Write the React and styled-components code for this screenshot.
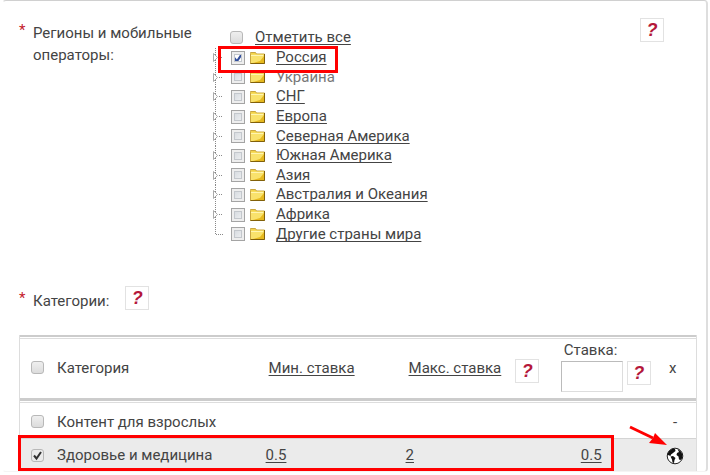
import React from "react";
import styled, { createGlobalStyle } from "styled-components";

const GlobalStyle = createGlobalStyle`
  * { box-sizing: border-box; }
  body {
    margin: 0;
    background: #fff;
    color: #444;
    font: 15px/22px Roboto, "Liberation Sans", sans-serif;
    overflow: hidden;
  }
`;

const Card = styled.main`
  margin: 0 2px 0 2px;
  padding: 17px 9px 0 16px;
  border: 1px solid #d0d0d0;
  border-left-color: #fff;
  border-right: 2px solid #dedede;
  border-bottom-color: #f4f4f4;
  border-radius: 4px;
`;

const Field = styled.section`
  display: grid;
  grid-template-columns: 14px 180px 1fr auto;
  align-items: start;
  padding-right: 33px;
`;

const Star = styled.span`
  color: #c4202c;
  line-height: 24px;
`;

const FieldLabel = styled.h2`
  margin: 4px 0 0;
  font-size: 15px;
  font-weight: 400;
  white-space: nowrap;
`;

const HelpButton = styled.button`
  flex: none;
  width: 24px;
  height: 24px;
  margin-top: ${(p) => p.$drop || 0}px;
  padding: 0;
  border: 1px solid #e2e2e2;
  background: #fff;
  color: #b4173a;
  font: italic 700 18px/20px "Liberation Sans", Arial, sans-serif;
`;

const Check = styled.input`
  appearance: none;
  flex: none;
  display: block;
  width: ${(p) => (p.$square ? 14 : 13)}px;
  height: ${(p) => (p.$square ? 14 : 13)}px;
  margin: 0;
  border: 1px solid ${(p) => (p.$square ? "#a4a4a4" : "#b8b8b8")};
  border-radius: ${(p) => (p.$square ? 0 : 3)}px;
  background: ${(p) =>
    p.$square
      ? "linear-gradient(135deg, #cfd4da, #f4f5f6)"
      : "linear-gradient(#efefef, #dcdcdc)"};
  box-shadow: ${(p) => (p.$square ? "inset 0 0 0 2px #eee, inset 0 0 0 3px #c3c7cc" : "none")};

  &:checked {
    background-image: url("data:image/svg+xml,%3Csvg xmlns='http://www.w3.org/2000/svg' viewBox='0 0 11 11'%3E%3Cpath d='M2 5.5L4.5 8.5L9 2' fill='none' stroke='${(p) =>
      p.$square ? "%23324f9c" : "%23333"}' stroke-width='2'/%3E%3C/svg%3E");
  }
`;

const Regions = styled.div`
  padding-top: 8px;
`;

const CheckAll = styled.div`
  display: flex;
  align-items: center;
  gap: 12px;
  height: 22px;
  padding-left: 17px;
`;

const Tree = styled.ul`
  display: grid;
  grid-auto-rows: 1fr;
  height: 196px;
  margin: 0;
  padding: 0;
  list-style: none;
  line-height: 19px;
`;

const TreeItem = styled.li`
  position: relative;
  display: flex;
  align-items: center;
`;

const Branch = styled.svg`
  flex: none;
  width: 18px;
  height: 19px;
`;

const Folder = styled.svg`
  flex: none;
  width: 16px;
  height: 14px;
  margin: 0 10px 0 5px;
`;

const TextLink = styled.a`
  color: ${(p) => (p.$muted ? "#777" : "#444")};
  text-decoration: ${(p) => (p.$muted ? "none" : "underline")};
  text-decoration-thickness: 1px;
  text-decoration-skip-ink: none;
  text-underline-offset: 2px;
  white-space: nowrap;
`;

const RegionMark = styled.span`
  position: absolute;
  top: -2px;
  left: 5px;
  width: 120px;
  height: 27px;
  border: 3px solid #f00;
  pointer-events: none;
  z-index: 1;
`;

const CategoryField = styled.section`
  display: grid;
  grid-template-columns: 14px auto auto;
  justify-content: start;
  align-items: start;
  margin-top: 42px;
`;

const CategoryHelp = styled.div`
  margin-left: 16px;
`;

const Table = styled.table`
  width: 100%;
  margin-top: 23px;
  border-collapse: separate;
  border-spacing: 0;
  table-layout: fixed;
  border-left: 1px solid #ddd;
  border-right: 1px solid #ddd;
`;

const Col = styled.col`
  width: ${(p) => p.$w};
`;

const HeadCell = styled.th`
  height: 66px;
  padding: ${(p) => p.$pad || "0"};
  border-top: 2px solid #ccc;
  border-bottom: 3px solid #ccc;
  box-shadow: inset 0 1px #fff, inset 0 2px #ddd;
  font-weight: 400;
  text-align: left;
`;

const Row = styled.tr`
  position: relative;
  background: ${(p) => (p.$active ? "#ebebeb" : "#fff")};
`;

const Cell = styled.td`
  height: ${(p) => (p.$first ? 38 : 32)}px;
  padding: ${(p) => p.$pad || (p.$first ? "4px 0 0" : "0")};
  border-bottom: ${(p) => (p.$first ? "1px solid #d4d4d4" : "0")};
  box-shadow: ${(p) => (p.$first ? "inset 0 1px #fff, inset 0 2px #ddd" : "none")};
  text-align: ${(p) => p.$align || "left"};
`;

const CheckLabel = styled.label`
  display: flex;
  align-items: center;
  gap: 13px;
  padding-left: 11px;
  white-space: nowrap;
`;

const Inline = styled.div`
  display: flex;
  align-items: ${(p) => p.$align || "center"};
  gap: ${(p) => p.$gap}px;
`;

const RateLabel = styled.label`
  display: block;
  padding-left: 3px;
  line-height: 22px;
`;

const RateInput = styled.input`
  width: 62px;
  height: 31px;
  padding: 0 4px;
  border: 1px solid #ddd;
  border-top-color: #bbb;
  border-left-color: #bbb;
  background: #fff;
  font: inherit;
`;

const RowMark = styled.span`
  position: absolute;
  top: -4px;
  bottom: 0;
  left: -2px;
  right: 82px;
  border: 3px solid #f00;
  pointer-events: none;
`;

const Globe = styled.svg`
  display: inline-block;
  width: 18px;
  height: 18px;
  vertical-align: middle;
`;

const Arrow = styled.svg`
  position: absolute;
  top: -14px;
  right: 27px;
  width: 40px;
  height: 22px;
  pointer-events: none;
`;

const regions = [
  { name: "Россия", checked: true },
  { name: "Украина", muted: true },
  { name: "СНГ" },
  { name: "Европа" },
  { name: "Северная Америка" },
  { name: "Южная Америка" },
  { name: "Азия" },
  { name: "Австралия и Океания" },
  { name: "Африка" },
  { name: "Другие страны мира" },
];

function Help({ drop }) {
  return <HelpButton type="button" aria-label="Справка" $drop={drop}>?</HelpButton>;
}

function BranchLines({ last }) {
  return (
    <Branch viewBox="0 0 18 19" fill="none" aria-hidden="true">
      <path d={last ? "M2.5 0V10" : "M2.5 0V19"} stroke="#888" strokeDasharray="1 1" />
      <path d={last ? "M3 9.500H10" : "M6 9.500H10"} stroke="#888" strokeDasharray="1 1" />
      {!last && <path d="M.5 5.500V13.500L4.500 9.500Z" fill="#fff" stroke="#aaa" />}
    </Branch>
  );
}

function FolderIcon() {
  return (
    <Folder viewBox="0 0 16 14" aria-hidden="true">
      <path d="M.5 2.500V1.500H5.500L6.500 3H14.500V12.500H.5Z" fill="#f3d34a" stroke="#c9a640" />
      <path d="M1 3.500H14V12H1Z" fill="#f9e26c" />
      <path d="M1 4.500H13" stroke="#fff5b0" />
      <path d="M14 5V12H3L10 10Z" fill="#e6b91f" />
      <path d="M.5 12.500H14.500V3" fill="none" stroke="#81600b" />
    </Folder>
  );
}

export default function App() {
  return (
    <>
      <GlobalStyle />
      <Card>
        <Field>
          <Star>*</Star>
          <FieldLabel>Регионы и мобильные<br />операторы:</FieldLabel>
          <Regions>
            <CheckAll>
              <Check type="checkbox" id="all-regions" aria-label="Отметить все" />
              <TextLink href="#all">Отметить все</TextLink>
            </CheckAll>
            <Tree>
              {regions.map((r, i) => (
                <TreeItem key={r.name}>
                  <BranchLines last={i === regions.length - 1} />
                  <Check type="checkbox" $square defaultChecked={r.checked} aria-label={r.name} />
                  <FolderIcon />
                  <TextLink href="#region" $muted={r.muted}>{r.name}</TextLink>
                  {r.checked && <RegionMark />}
                </TreeItem>
              ))}
            </Tree>
          </Regions>
          <Help />
        </Field>

        <CategoryField>
          <Star>*</Star>
          <FieldLabel>Категории:</FieldLabel>
          <CategoryHelp><Help /></CategoryHelp>
        </CategoryField>

        <Table>
          <colgroup>
            <Col $w="35%" />
            <Col $w="21%" />
            <Col $w="24%" />
            <Col />
            <Col $w="42px" />
          </colgroup>
          <thead>
            <tr>
              <HeadCell>
                <CheckLabel><Check type="checkbox" />Категория</CheckLabel>
              </HeadCell>
              <HeadCell $pad="0 0 0 12px"><TextLink href="#min">Мин. ставка</TextLink></HeadCell>
              <HeadCell $pad="0 0 0 10px">
                <Inline $gap={14}>
                  <TextLink href="#max">Макс. ставка</TextLink>
                  <Help drop={6} />
                </Inline>
              </HeadCell>
              <HeadCell $pad="0 0 4px">
                <RateLabel htmlFor="rate">Ставка:</RateLabel>
                <Inline $gap={4} $align="flex-start">
                  <RateInput id="rate" type="text" />
                  <Help />
                </Inline>
              </HeadCell>
              <HeadCell $pad="0 0 0 15px">x</HeadCell>
            </tr>
          </thead>
          <tbody>
            <Row>
              <Cell $first>
                <CheckLabel><Check type="checkbox" />Контент для взрослых</CheckLabel>
              </Cell>
              <Cell $first />
              <Cell $first />
              <Cell $first />
              <Cell $first $align="center">-</Cell>
            </Row>
            <Row $active>
              <Cell>
                <CheckLabel><Check type="checkbox" defaultChecked />Здоровье и медицина</CheckLabel>
                <RowMark />
              </Cell>
              <Cell $pad="0 0 0 9px"><TextLink href="#min">0.5</TextLink></Cell>
              <Cell $pad="0 0 0 7px"><TextLink href="#max">2</TextLink></Cell>
              <Cell $pad="0 0 0 20px"><TextLink href="#rate">0.5</TextLink></Cell>
              <Cell $align="center">
                <Globe viewBox="0 0 18 18" role="img" aria-label="Регионы">
                  <circle cx="9" cy="9" r="7.800" fill="#fff" stroke="#222" />
                  <path d="M3 4L6 2L9 2L9.500 4L7 6L5 7.500L4.500 9L2 8L1.500 7Z" fill="#111" />
                  <path d="M4.500 9.500L7 9L9.500 11L8.500 13L8 16L6.500 15.500L6 12.500Z" fill="#111" />
                  <path d="M11.500 2L14.500 4L16.500 7.500L16 11.500L14.500 13L13 12.500L12.500 9.500L10.500 8L11 6L13 5Z" fill="#111" />
                </Globe>
                <Arrow viewBox="0 0 40 22" aria-hidden="true">
                  <path d="M1 2L24 13" stroke="#f00" strokeWidth="3" />
                  <path d="M26 8L38 20L20 18L24 13Z" fill="#f00" />
                </Arrow>
              </Cell>
            </Row>
          </tbody>
        </Table>
      </Card>
    </>
  );
}
